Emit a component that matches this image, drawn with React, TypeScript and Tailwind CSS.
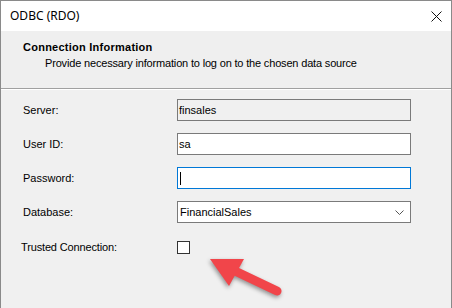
import React from 'react';

const Arrow: React.FC = () => (
  <svg
    className="absolute inset-0 pointer-events-none"
    width={452}
    height={308}
    viewBox="0 0 452 308"
    style={{ filter: 'drop-shadow(-1px 2px 2px rgba(0,0,0,0.4))' }}
  >
    <line x1={276} y1={290} x2={234} y2={270} stroke="#f1454a" strokeWidth={9} strokeLinecap="round" />
    <polygon points="209,258 243,258 228,285" fill="#f1454a" />
  </svg>
);

const Field: React.FC<{ label: string; children: React.ReactNode }> = ({ label, children }) => (
  <div className="flex items-center h-[22px]">
    <span className="w-[154px] text-[11px] text-black">{label}</span>
    {children}
  </div>
);

const App: React.FC = () => {
  return (
    <div className="relative w-[452px] h-[308px] overflow-hidden bg-[#f0f0f0] border-t border-l border-r border-[#8a8a8a] font-['Liberation_Sans',sans-serif]">
      {/* title bar */}
      <div className="h-[30px] bg-white flex items-center justify-between pl-[9px] pr-[9px]">
        <span className="text-[12px] text-black font-['Noto_Sans',sans-serif]">ODBC (RDO)</span>
        <svg width={11} height={11} viewBox="0 0 11 11">
          <path d="M0.5 0.5 L10.5 10.5 M10.5 0.5 L0.5 10.5" stroke="#111" strokeWidth={1} />
        </svg>
      </div>

      {/* header */}
      <div className="h-[58px] bg-[#efefef] pl-[22px] pt-[10px] border-b border-[#a0a0a0]">
        <div className="text-[11px] font-bold text-black leading-[13px] tracking-[0.25px]">Connection Information</div>
        <div className="text-[11px] text-black leading-[13px] mt-[3px] pl-[22px] tracking-[-0.17px]">
          Provide necessary information to log on to the chosen data source
        </div>
      </div>
      <div className="h-px bg-white" />

      {/* body */}
      <div className="pl-[22px] pt-[9px] flex flex-col gap-[12px]">
        <Field label="Server:">
          <div className="w-[234px] h-[22px] border border-[#7a7a7a] bg-[#f0f0f0] flex items-center pl-[1px] text-[11px] text-black">
            finsales
          </div>
        </Field>
        <Field label="User ID:">
          <div className="w-[234px] h-[22px] border border-[#7a7a7a] bg-white flex items-center pl-[1px] text-[11px] text-black">
            sa
          </div>
        </Field>
        <Field label="Password:">
          <div className="w-[234px] h-[22px] border border-[#0078d7] bg-white flex items-center pl-[2px]">
            <div className="w-px h-[13px] bg-black" />
          </div>
        </Field>
        <Field label="Database:">
          <div className="w-[234px] h-[22px] border border-[#7a7a7a] bg-white flex items-center justify-between pl-[2px] pr-[6px] text-[11px] text-black">
            <span>FinancialSales</span>
            <svg width={9} height={5} viewBox="0 0 9 5">
              <path d="M0.5 0.5 L4.5 4.5 L8.5 0.5" fill="none" stroke="#555" strokeWidth={1} />
            </svg>
          </div>
        </Field>
        <div className="flex items-center h-[22px] mt-[1px]">
          <span className="w-[156px] -ml-[2px] text-[11px] text-black tracking-[-0.15px]">Trusted Connection:</span>
          <div className="w-[13px] h-[13px] border border-[#333] bg-white" />
        </div>
      </div>

      <Arrow />
    </div>
  );
};

export default App;
